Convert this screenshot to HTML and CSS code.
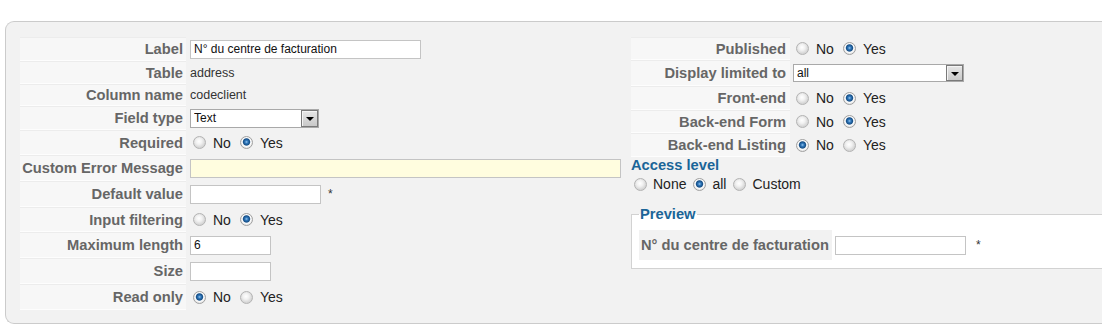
FILE: index.html
```html
<!DOCTYPE html>
<html lang="fr">
<head>
    <meta charset="UTF-8">
    <title>Champ - N° du centre de facturation</title>
    <link rel="stylesheet" href="styles.css">
</head>
<body>
    <div class="panel">
        <div class="col-left">
            <div class="row h24">
                <div class="lbl">Label</div>
                <div class="val"><input class="field w231" type="text" value="N° du centre de facturation"></div>
            </div>
            <div class="row h23">
                <div class="lbl">Table</div>
                <div class="val">address</div>
            </div>
            <div class="row h22">
                <div class="lbl">Column name</div>
                <div class="val">codeclient</div>
            </div>
            <div class="row h24">
                <div class="lbl">Field type</div>
                <div class="val">
                    <span class="select"><select class="w129"><option>Text</option></select></span>
                </div>
            </div>
            <div class="row h25">
                <div class="lbl">Required</div>
                <div class="val radios">
                    <input type="radio" name="required" id="req0"><label for="req0">No</label>
                    <input type="radio" name="required" id="req1" checked><label for="req1">Yes</label>
                </div>
            </div>
            <div class="row h26">
                <div class="lbl">Custom Error Message</div>
                <div class="val"><input class="field w431 warn" type="text"></div>
            </div>
            <div class="row h26">
                <div class="lbl">Default value</div>
                <div class="val"><input class="field w131" type="text"><span class="star">*</span></div>
            </div>
            <div class="row h25">
                <div class="lbl">Input filtering</div>
                <div class="val radios">
                    <input type="radio" name="filter" id="fil0"><label for="fil0">No</label>
                    <input type="radio" name="filter" id="fil1" checked><label for="fil1">Yes</label>
                </div>
            </div>
            <div class="row h26">
                <div class="lbl">Maximum length</div>
                <div class="val"><input class="field w81" type="text" value="6"></div>
            </div>
            <div class="row h26">
                <div class="lbl">Size</div>
                <div class="val"><input class="field w81" type="text"></div>
            </div>
            <div class="row h26">
                <div class="lbl">Read only</div>
                <div class="val radios">
                    <input type="radio" name="readonly" id="ro0" checked><label for="ro0">No</label>
                    <input type="radio" name="readonly" id="ro1"><label for="ro1">Yes</label>
                </div>
            </div>
        </div>

        <div class="col-right">
            <div class="row h23">
                <div class="lbl lbl-r">Published</div>
                <div class="val val-r radios">
                    <input type="radio" name="published" id="pub0"><label for="pub0">No</label>
                    <input type="radio" name="published" id="pub1" checked><label for="pub1">Yes</label>
                </div>
            </div>
            <div class="row h26">
                <div class="lbl lbl-r">Display limited to</div>
                <div class="val val-r">
                    <span class="select"><select class="w171"><option>all</option></select></span>
                </div>
            </div>
            <div class="row h24">
                <div class="lbl lbl-r">Front-end</div>
                <div class="val val-r radios">
                    <input type="radio" name="front" id="fe0"><label for="fe0">No</label>
                    <input type="radio" name="front" id="fe1" checked><label for="fe1">Yes</label>
                </div>
            </div>
            <div class="row h23">
                <div class="lbl lbl-r">Back-end Form</div>
                <div class="val val-r radios">
                    <input type="radio" name="beform" id="bf0"><label for="bf0">No</label>
                    <input type="radio" name="beform" id="bf1" checked><label for="bf1">Yes</label>
                </div>
            </div>
            <div class="row h24">
                <div class="lbl lbl-r">Back-end Listing</div>
                <div class="val val-r radios">
                    <input type="radio" name="belist" id="bl0" checked><label for="bl0">No</label>
                    <input type="radio" name="belist" id="bl1"><label for="bl1">Yes</label>
                </div>
            </div>

            <h3 class="heading">Access level</h3>
            <div class="radios access">
                <input type="radio" name="access" id="ac0"><label for="ac0">None</label>
                <input type="radio" name="access" id="ac1" checked><label for="ac1">all</label>
                <input type="radio" name="access" id="ac2"><label for="ac2">Custom</label>
            </div>

            <fieldset class="preview">
                <legend>Preview</legend>
                <div class="preview-row">
                    <div class="preview-lbl">N° du centre de facturation</div>
                    <input class="field w131" type="text">
                    <span class="star star-preview">*</span>
                </div>
            </fieldset>
        </div>
    </div>
</body>
</html>
```

FILE: styles.css
```css
* {
    box-sizing: border-box;
}

body {
    margin: 0;
    background-color: #fff;
    font-family: "Liberation Sans", Arial, sans-serif;
    color: #333;
    overflow: hidden;
}

.panel {
    display: flex;
    height: 303px;
    margin: 21px -40px 0 5px;
    padding: 15px 0 0 14px;
    background-color: #f2f2f2;
    border: 1px solid #cbcbcb;
    border-right: none;
    border-radius: 9px 0 0 9px;
}

.col-left {
    width: 611px;
    flex-shrink: 0;
}

.col-right {
    flex: 1;
}

.row {
    display: flex;
}

.h22 { height: 22px; }
.h23 { height: 23px; }
.h24 { height: 24px; }
.h25 { height: 25px; }
.h26 { height: 26px; }

.lbl {
    width: 166px;
    flex-shrink: 0;
    display: flex;
    align-items: center;
    justify-content: flex-end;
    padding-right: 3px;
    background-color: #f7f7f7;
    border-top: 1px solid #ececec;
    border-bottom: 1px solid #fdfdfd;
    font-size: 14.7px;
    font-weight: bold;
    color: #666;
    white-space: nowrap;
}

.lbl-r {
    width: 159px;
    padding-right: 4px;
}

.val {
    display: flex;
    align-items: center;
    padding-left: 4px;
    font-size: 12.5px;
    white-space: nowrap;
}

.val-r {
    padding-left: 3px;
}

/* text inputs */
.field {
    height: 19px;
    margin: 0;
    padding: 0 3px;
    border: 1px solid #c4c4c4;
    background-color: #fff;
    font-family: "Liberation Sans", Arial, sans-serif;
    font-size: 12px;
    color: #111;
}

.warn {
    background-color: #fffddf;
}

.w81 { width: 81px; }
.w131 { width: 131px; }
.w231 { width: 231px; }
.w431 { width: 431px; }

.star {
    margin-left: 7px;
    font-size: 12px;
    color: #333;
}

/* selects with an old style drop button */
.select {
    position: relative;
    display: inline-block;
}

.select select {
    appearance: none;
    -webkit-appearance: none;
    display: block;
    margin: 0;
    padding: 0 0 0 3px;
    border: 1px solid #a9a9a9;
    background-color: #fff;
    font-family: "Liberation Sans", Arial, sans-serif;
    font-size: 12px;
    color: #111;
}

.w129 { width: 129px; height: 19px; }
.w171 { width: 171px; height: 18px; }

.select::after {
    content: "";
    position: absolute;
    top: 1px;
    right: 1px;
    bottom: 1px;
    width: 15px;
    border: 1px solid #7a7a7a;
    box-shadow: inset 1px 1px 0 #f4f4f4;
    background: linear-gradient(#e6e6e6, #c9c9c9);
}

.select::before {
    content: "";
    position: absolute;
    z-index: 1;
    top: 50%;
    right: 5px;
    margin-top: -1px;
    border-left: 4px solid transparent;
    border-right: 4px solid transparent;
    border-top: 4px solid #000;
}

/* radios */
.radios {
    display: flex;
    align-items: center;
    font-size: 14px;
    color: #222;
}

.radios input {
    appearance: none;
    -webkit-appearance: none;
    width: 13px;
    height: 13px;
    margin: 0 7px 0 3px;
    border: 1px solid #b3b3b3;
    border-radius: 50%;
    background: radial-gradient(circle at 45% 40%, #fff 0, #f1f1f1 3px, #d6d6d6 6px);
}

.radios input:checked {
    border-color: #a0a0a0;
    background: radial-gradient(circle at 50% 45%, #9cc8ec 0, #2f78bd 1.5px, #174f86 3.2px, #fff 4.2px, #eaeaea 5.5px);
}

.radios label {
    margin-right: 6px;
}

.heading {
    margin: 0;
    height: 17px;
    font-size: 14.7px;
    font-weight: bold;
    line-height: 17px;
    color: #1b6598;
}

.access {
    height: 20px;
}

.access input {
    margin-right: 6px;
}

.access label {
    margin-right: 4px;
}

.preview {
    margin: 12px 0 0;
    padding: 8px 7px 8px;
    border: 1px solid #d2d2d2;
    background-color: #fff;
}

.preview legend {
    padding: 0 1px;
    font-size: 14.7px;
    font-weight: bold;
    color: #1b6598;
}

.preview-row {
    display: flex;
    align-items: center;
}

.preview-lbl {
    height: 30px;
    display: flex;
    align-items: center;
    padding: 0 3px 0 2px;
    margin-right: 3px;
    background-color: #f2f2f2;
    font-size: 14.7px;
    font-weight: bold;
    color: #666;
}

.star-preview {
    margin-left: 10px;
}
```
